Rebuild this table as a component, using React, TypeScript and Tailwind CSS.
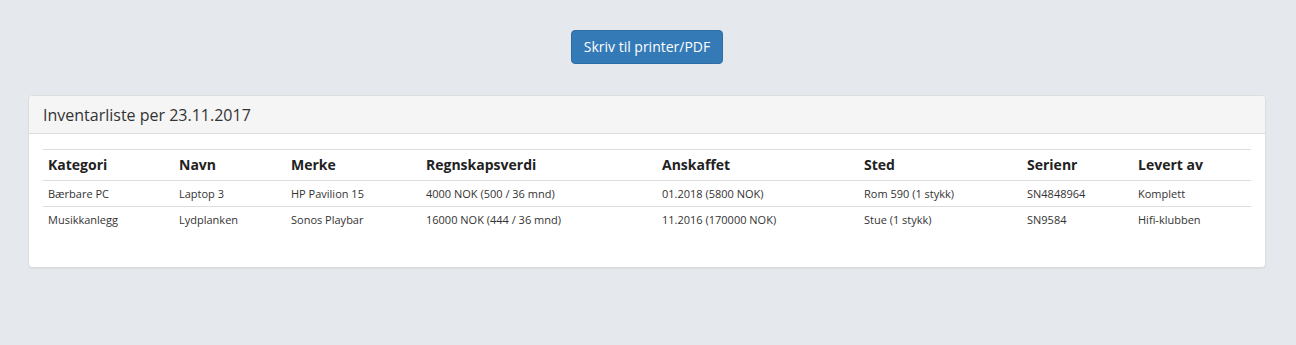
const rows = [
  ["Bærbare PC", "Laptop 3", "HP Pavilion 15", "4000 NOK (500 / 36 mnd)", "01.2018 (5800 NOK)", "Rom 590 (1 stykk)", "SN4848964", "Komplett"],
  ["Musikkanlegg", "Lydplanken", "Sonos Playbar", "16000 NOK (444 / 36 mnd)", "11.2016 (170000 NOK)", "Stue (1 stykk)", "SN9584", "Hifi-klubben"],
];

const headers = ["Kategori", "Navn", "Merke", "Regnskapsverdi", "Anskaffet", "Sted", "Serienr", "Levert av"];
const widths = ["w-[131px]", "w-[112px]", "w-[135px]", "w-[236px]", "w-[202px]", "w-[163px]", "w-[111px]", "w-[118px]"];

export default function App() {
  return (
    <div className="min-h-screen bg-[#e5e8ec] text-[#333] pt-[30px] pl-[28px] pr-[30px]" style={{ fontFamily: "'Open Sans', sans-serif" }}>
      <div className="flex justify-center">
        <button className="h-[34px] px-3 text-sm text-white bg-[#337ab7] border border-[#2e6da4] rounded-[4px]">
          Skriv til printer/PDF
        </button>
      </div>

      <div className="mt-[31px] bg-white border border-[#ddd] rounded-[4px] shadow-[0_1px_1px_rgba(0,0,0,0.05)]">
        <div className="h-[38px] px-[14px] flex items-center bg-[#f5f5f5] border-b border-[#ddd] rounded-t-[4px]">
          <h3 className="text-base">Inventarliste per 23.11.2017</h3>
        </div>
        <div className="px-[14px] py-[15px]">
          <table className="w-full mb-5 border-collapse table-fixed">
            <thead>
              <tr className="border-t border-[#ddd]">
                {headers.map((h, i) => (
                  <th key={h} className={`${widths[i]} text-left text-sm font-bold text-[#222] px-[5px] pt-[5px] pb-[5px] border-b border-[#ddd] leading-5`}>
                    {h}
                  </th>
                ))}
              </tr>
            </thead>
            <tbody>
              {rows.map((r, ri) => (
                <tr key={ri} className={ri > 0 ? "border-t border-[#ddd]" : ""}>
                  {r.map((c, ci) => (
                    <td key={ci} className="text-[11px] px-[5px] py-[4px] leading-[17px]">
                      {c}
                    </td>
                  ))}
                </tr>
              ))}
            </tbody>
          </table>
        </div>
      </div>
    </div>
  );
}
